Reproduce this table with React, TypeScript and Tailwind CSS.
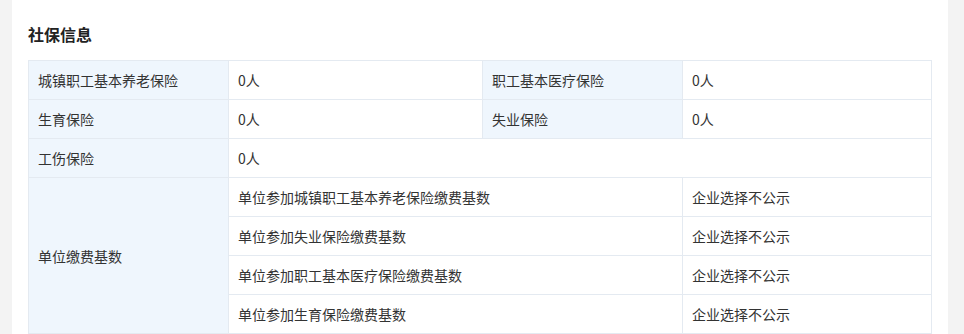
const labelCell = "bg-[#eff6fd] border border-[#e4eaf1] px-[9px] h-[39px] align-middle font-normal text-left";
const valueCell = "border border-[#e4eaf1] px-[9px] h-[39px] align-middle";

const bases = [
  "单位参加城镇职工基本养老保险缴费基数",
  "单位参加失业保险缴费基数",
  "单位参加职工基本医疗保险缴费基数",
  "单位参加生育保险缴费基数",
];

export default function App() {
  return (
    <div className="w-[964px] h-[334px] overflow-hidden bg-[#f3f3f3] pl-[12px] pr-[16px]" style={{ fontFamily: '"Noto Sans CJK SC", "Noto Sans", sans-serif' }}>
      <div className="bg-white h-full px-[16px] pt-[22px]">
        <h2 className="text-[16px] font-bold text-[#222] leading-[24px] mb-[14px]">社保信息</h2>
        <table className="border-collapse w-[903px] table-fixed text-[14px] text-[#333] leading-[20px]">
          <colgroup>
            <col className="w-[200px]" />
            <col className="w-[254px]" />
            <col className="w-[200px]" />
            <col className="w-[249px]" />
          </colgroup>
          <tbody>
            <tr>
              <th className={labelCell}>城镇职工基本养老保险</th>
              <td className={valueCell}>0人</td>
              <th className={labelCell}>职工基本医疗保险</th>
              <td className={valueCell}>0人</td>
            </tr>
            <tr>
              <th className={labelCell}>生育保险</th>
              <td className={valueCell}>0人</td>
              <th className={labelCell}>失业保险</th>
              <td className={valueCell}>0人</td>
            </tr>
            <tr>
              <th className={labelCell}>工伤保险</th>
              <td className={valueCell} colSpan={3}>0人</td>
            </tr>
            {bases.map((b, i) => (
              <tr key={b}>
                {i === 0 && (
                  <th className={labelCell} rowSpan={4}>单位缴费基数</th>
                )}
                <td className={valueCell} colSpan={2}>{b}</td>
                <td className={valueCell}>企业选择不公示</td>
              </tr>
            ))}
          </tbody>
        </table>
      </div>
    </div>
  );
}
